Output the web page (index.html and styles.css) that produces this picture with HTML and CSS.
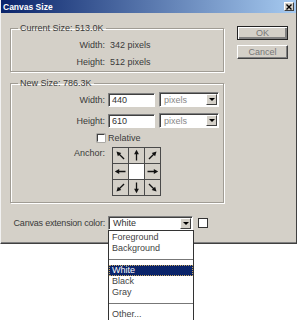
FILE: index.html
```html
<!DOCTYPE html>
<html lang="en">
<head>
    <meta charset="UTF-8">
    <title>Canvas Size</title>
    <link rel="stylesheet" href="styles.css">
</head>
<body>
    <svg class="defs" width="0" height="0">
        <defs>
            <g id="arrow">
                <line x1="7.5" y1="12.5" x2="7.5" y2="5" stroke="#111" stroke-width="1.3"/>
                <polygon points="7.5,1.8 5.1,6.2 9.9,6.2" fill="#111"/>
            </g>
        </defs>
    </svg>

    <div class="window">
        <div class="titlebar">
            <span class="title">Canvas Size</span>
            <span class="close">
                <svg width="6" height="6" viewBox="0 0 6 6"><path d="M0.5 0.5 L5.5 5.5 M5.5 0.5 L0.5 5.5" stroke="#000" stroke-width="1.4"/></svg>
            </span>
        </div>

        <div class="content">
            <div class="main">
                <fieldset class="group group-current">
                    <legend>Current Size: 513.0K</legend>
                    <div class="row info-row"><span class="label">Width:</span><span class="value">342 pixels</span></div>
                    <div class="row info-row"><span class="label">Height:</span><span class="value">512 pixels</span></div>
                </fieldset>

                <fieldset class="group group-new">
                    <legend>New Size: 786.3K</legend>
                    <div class="row field-row">
                        <span class="label">Width:</span>
                        <span class="input">440</span>
                        <span class="select select-unit">pixels<i class="arrow"></i></span>
                    </div>
                    <div class="row field-row">
                        <span class="label">Height:</span>
                        <span class="input">610</span>
                        <span class="select select-unit">pixels<i class="arrow"></i></span>
                    </div>
                    <div class="row check-row">
                        <span class="label"><span class="checkbox"></span></span>
                        <span>Relative</span>
                    </div>
                    <div class="row anchor-row">
                        <span class="label">Anchor:</span>
                        <div class="anchor">
                            <span class="cell"><svg class="r315" viewBox="0 0 15 15"><use href="#arrow"/></svg></span>
                            <span class="cell"><svg viewBox="0 0 15 15"><use href="#arrow"/></svg></span>
                            <span class="cell"><svg class="r45" viewBox="0 0 15 15"><use href="#arrow"/></svg></span>
                            <span class="cell"><svg class="r270" viewBox="0 0 15 15"><use href="#arrow"/></svg></span>
                            <span class="cell cell-center"></span>
                            <span class="cell"><svg class="r90" viewBox="0 0 15 15"><use href="#arrow"/></svg></span>
                            <span class="cell"><svg class="r225" viewBox="0 0 15 15"><use href="#arrow"/></svg></span>
                            <span class="cell"><svg class="r180" viewBox="0 0 15 15"><use href="#arrow"/></svg></span>
                            <span class="cell"><svg class="r135" viewBox="0 0 15 15"><use href="#arrow"/></svg></span>
                        </div>
                    </div>
                </fieldset>

                <div class="row ext-row">
                    <span class="label">Canvas extension color:</span>
                    <div class="select select-color">White<i class="arrow"></i>
                        <ul class="dropdown">
                            <li>Foreground</li>
                            <li>Background</li>
                            <li class="sep"></li>
                            <li class="selected">White</li>
                            <li>Black</li>
                            <li>Gray</li>
                            <li class="sep"></li>
                            <li>Other...</li>
                        </ul>
                    </div>
                    <span class="swatch"></span>
                </div>
            </div>

            <div class="buttons">
                <button class="btn btn-default">OK</button>
                <button class="btn">Cancel</button>
            </div>
        </div>
    </div>
</body>
</html>
```

FILE: styles.css
```css
html, body {
    min-height: 320px;
}
body {
    margin: 0;
    background: #fff;
    font-family: 'Liberation Sans', Arial, sans-serif;
    font-size: 9px;
    line-height: 10px;
    color: #3a3a3a;
}
.defs {
    position: absolute;
}
.window {
    width: 297px;
    height: 244px;
    box-sizing: border-box;
    background: #d4d0c8;
    border-left: 1px solid #f2f2f2;
    border-right: 1px solid #404040;
    border-bottom: 1px solid #404040;
    box-shadow: inset 0 -1px 0 #808080;
}
.titlebar {
    height: 13px;
    display: flex;
    align-items: center;
    justify-content: space-between;
    padding: 0 2px 0 2px;
    background: linear-gradient(to right, #0a246a, #a6caf0);
}
.title {
    color: #fff;
    font-weight: bold;
    font-size: 8.5px;
}
.close {
    width: 10px;
    height: 9px;
    box-sizing: border-box;
    display: flex;
    align-items: center;
    justify-content: center;
    background: #d4d0c8;
    border: 1px solid;
    border-color: #fff #404040 #404040 #fff;
}
.content {
    display: flex;
    gap: 13px;
    padding: 10px 0 0 9px;
}
.main {
    width: 214px;
}
.group {
    margin: 0;
    min-width: 0;
    border: 1px solid #a09c94;
    box-shadow: inset 1px 1px 0 #fff, 1px 1px 0 #fff;
}
.group legend {
    margin-left: 7px;
    padding: 0 2px;
    line-height: 10px;
}
.group-current {
    padding: 3px 0 1px;
}
.group-new {
    margin-top: 6px;
    padding: 4px 0 6px;
}
.row {
    display: flex;
    align-items: center;
}
.label {
    width: 94px;
    flex: none;
    text-align: right;
    white-space: nowrap;
    margin-right: 3px;
}
.info-row {
    height: 17px;
}
.value {
    padding-left: 2px;
}
.field-row {
    height: 15px;
}
.field-row + .field-row {
    margin-top: 6px;
}
.input {
    width: 47px;
    height: 14px;
    box-sizing: border-box;
    padding-left: 3px;
    line-height: 12px;
    background: #fff;
    border: 1px solid;
    border-color: #808080 #fff #fff #808080;
    box-shadow: inset 1px 1px 0 #404040;
    color: #333;
}
.select {
    position: relative;
    height: 15px;
    box-sizing: border-box;
    display: flex;
    align-items: center;
    justify-content: space-between;
    padding-left: 4px;
    background: #fff;
    border: 1px solid;
    border-color: #808080 #fff #fff #808080;
    box-shadow: inset 1px 1px 0 #404040;
}
.select-unit {
    width: 60px;
    margin-left: 4px;
    color: #888;
}
.arrow {
    width: 11px;
    height: 11px;
    box-sizing: border-box;
    margin-right: 1px;
    display: flex;
    align-items: center;
    justify-content: center;
    background: #d4d0c8;
    border: 1px solid;
    border-color: #fff #404040 #404040 #fff;
}
.arrow::after {
    content: "";
    border-left: 3px solid transparent;
    border-right: 3px solid transparent;
    border-top: 3px solid #000;
}
.check-row {
    height: 15px;
    margin-top: 2px;
}
.check-row .label {
    display: flex;
    justify-content: flex-end;
}
.checkbox {
    width: 8px;
    height: 8px;
    box-sizing: border-box;
    background: #fff;
    border: 1px solid;
    border-color: #404040 #fff #fff #404040;
    box-shadow: 0 0 0 0.5px #808080;
}
.anchor-row {
    align-items: flex-start;
    margin-top: 2px;
}
.anchor-row .label {
    padding-top: 1px;
}
.anchor {
    margin-left: 4px;
    display: grid;
    grid-template-columns: repeat(3, 15px);
    grid-template-rows: repeat(3, 15px);
    gap: 1px;
    padding: 1px;
    background: #4a4a4a;
}
.cell {
    background: #d4d0c8;
}
.cell-center {
    background: #fff;
}
.cell svg {
    display: block;
    width: 15px;
    height: 15px;
}
.r45 { transform: rotate(45deg); }
.r90 { transform: rotate(90deg); }
.r135 { transform: rotate(135deg); }
.r180 { transform: rotate(180deg); }
.r225 { transform: rotate(225deg); }
.r270 { transform: rotate(270deg); }
.r315 { transform: rotate(315deg); }
.ext-row {
    margin-top: 13px;
}
.ext-row .label {
    width: 95px;
    letter-spacing: -0.2px;
}
.select-color {
    width: 85px;
    height: 14px;
    color: #333;
}
.swatch {
    width: 10px;
    height: 10px;
    box-sizing: border-box;
    margin-left: 5px;
    background: #fff;
    border: 1px solid #333;
}
.dropdown {
    position: absolute;
    z-index: 5;
    top: 13px;
    left: -1px;
    width: 86px;
    box-sizing: border-box;
    margin: 0;
    padding: 1px 0 0;
    list-style: none;
    background: #fff;
    border: 1px solid #333;
    color: #444;
}
.dropdown li {
    height: 11px;
    line-height: 11px;
    padding-left: 3px;
}
.dropdown .sep {
    display: flex;
    align-items: center;
    padding: 0;
}
.dropdown .sep::before {
    content: "";
    flex: 1;
    height: 1px;
    background: #777;
}
.dropdown .selected {
    background: #0a246a;
    color: #fff;
    outline: 1px dotted #c8a860;
    outline-offset: -1px;
}
.buttons {
    display: flex;
    flex-direction: column;
    gap: 5px;
    padding-top: 3px;
}
.btn {
    width: 51px;
    height: 14px;
    padding: 0;
    font: inherit;
    color: #777;
    background: #d4d0c8;
    border: 1px solid;
    border-color: #fff #404040 #404040 #fff;
    box-shadow: inset -1px -1px 0 #808080;
}
.btn-default {
    border-color: #222;
    box-shadow: inset 1px 1px 0 #fff, inset -2px -2px 0 #808080;
}
```
